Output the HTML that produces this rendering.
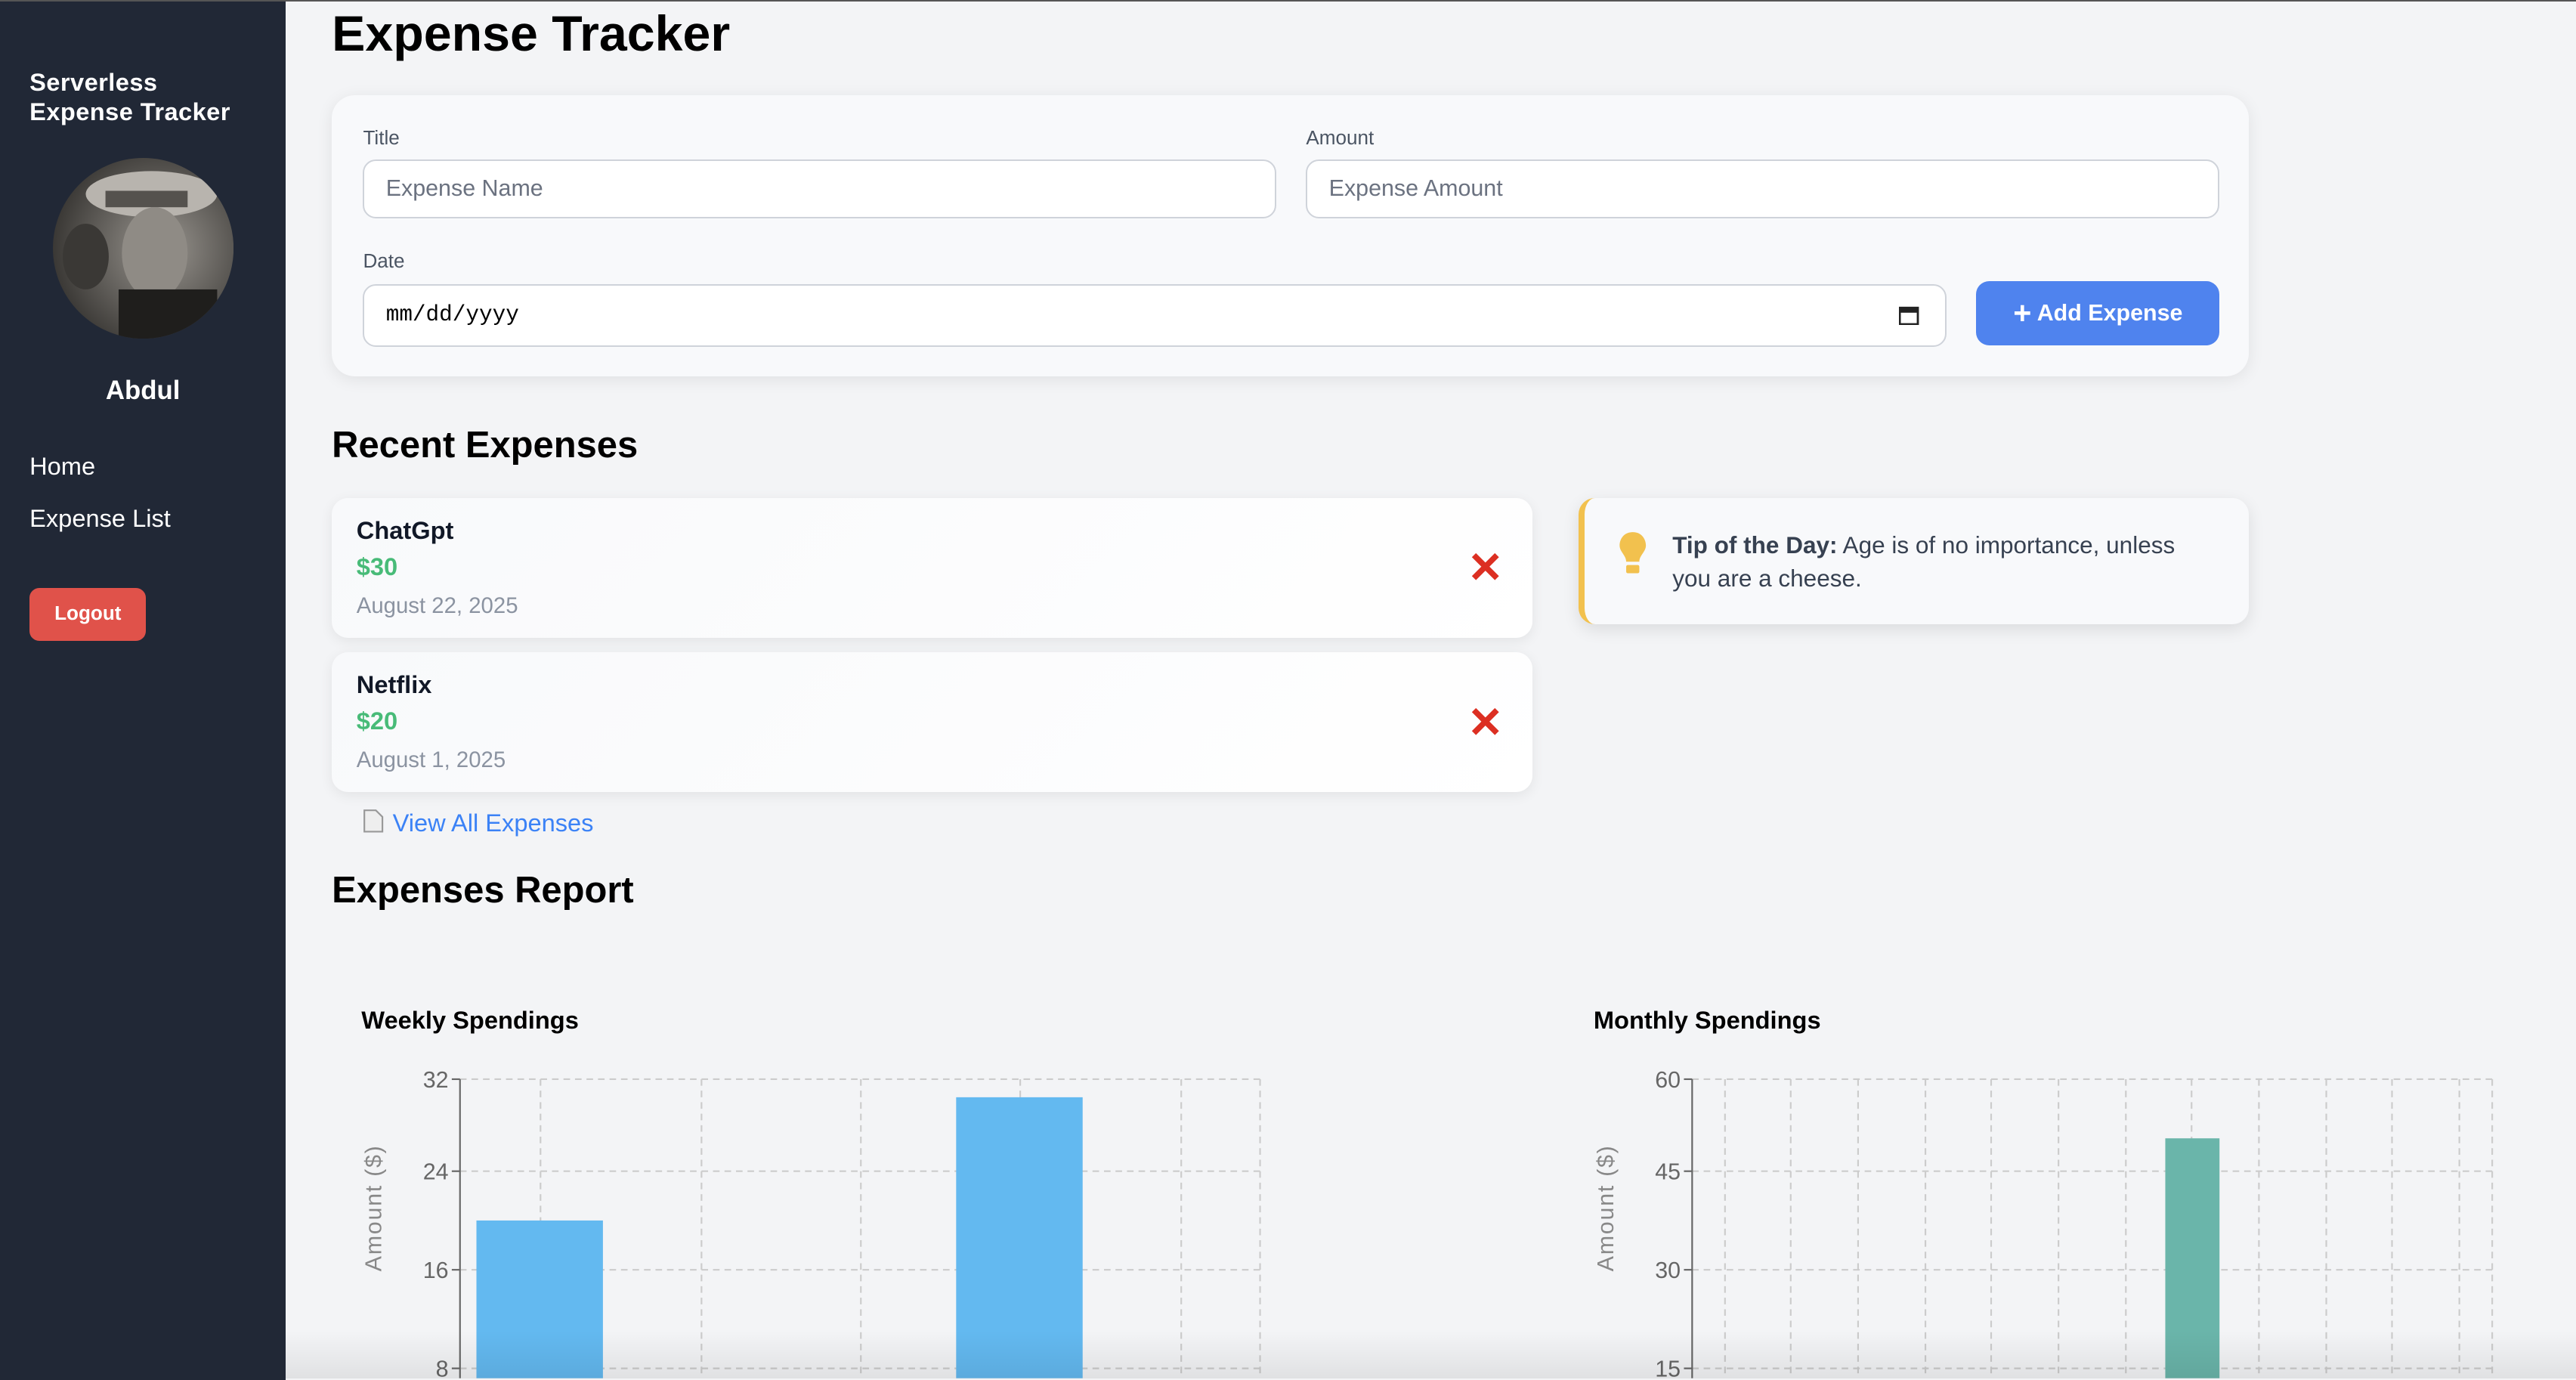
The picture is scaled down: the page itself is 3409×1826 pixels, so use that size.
<!DOCTYPE html>
<html><head><meta charset="utf-8"><style>
html,body{margin:0;padding:0;}
body{width:1568px;height:839px;overflow:hidden;zoom:2.17411;background:#f3f4f6;font-family:"Liberation Sans",sans-serif;position:relative;}
.a{position:absolute;}
#side{left:0;top:0;width:174px;height:839px;background:#212836;border-top:1px solid #555;}
.w{color:#fff;}
.card{background:#f8f9fb;border-radius:14px;box-shadow:0 2px 10px rgba(0,0,0,.08);}
.inp{background:#fff;border:1px solid #cfd3da;border-radius:8px;box-sizing:border-box;font-size:14px;color:#6b7280;padding-left:13px;line-height:34px;}
.lbl{font-size:12px;color:#4b5563;}
.exp{background:linear-gradient(135deg,#f8f9fb,#fff);border-radius:10px;box-shadow:0 2px 8px rgba(0,0,0,.07);}
.h2{font-size:22.5px;font-weight:bold;color:#000;}
</style></head><body>
<div id="side" class="a">
 <div class="a w" style="left:18px;top:40px;font-size:15px;font-weight:bold;line-height:18px;letter-spacing:0.2px;">Serverless<br>Expense Tracker</div>
 <svg class="a" style="left:32px;top:95px" width="110" height="110"><defs><clipPath id="c"><circle cx="55" cy="55" r="55"/></clipPath><radialGradient id="g" cx="0.6" cy="0.5" r="0.6"><stop offset="0" stop-color="#9a9690"/><stop offset="1" stop-color="#3a3835"/></radialGradient></defs><g clip-path="url(#c)"><rect width="110" height="110" fill="url(#g)"/><ellipse cx="60" cy="22" rx="40" ry="14" fill="#b8b4ae"/><rect x="32" y="20" width="50" height="10" fill="#55524e"/><ellipse cx="62" cy="58" rx="20" ry="28" fill="#8f8b85"/><rect x="40" y="80" width="60" height="30" fill="#1f1e1c"/><ellipse cx="20" cy="60" rx="14" ry="20" fill="#3a3835"/></g></svg>
 <div class="a w" style="left:0;width:174px;text-align:center;top:228px;font-size:16px;font-weight:bold;">Abdul</div>
 <div class="a w" style="left:18px;top:274px;font-size:15px;">Home</div>
 <div class="a w" style="left:18px;top:306px;font-size:15px;">Expense List</div>
 <div class="a w" style="left:18px;top:357px;width:71px;height:32px;background:#e0524a;border-radius:6px;font-size:12px;font-weight:bold;text-align:center;line-height:31px;">Logout</div>
</div>
<div class="a" style="left:174px;top:0;width:1394px;height:1px;background:#555"></div>
<div class="a" style="left:202px;top:3px;font-size:30.5px;font-weight:bold;color:#000;">Expense Tracker</div>
<div class="a card" style="left:202px;top:58px;width:1167px;height:171px;"></div>
<div class="a lbl" style="left:221px;top:77px;">Title</div>
<div class="a lbl" style="left:795px;top:77px;">Amount</div>
<div class="a inp" style="left:221px;top:97px;width:556px;height:36px;">Expense Name</div>
<div class="a inp" style="left:795px;top:97px;width:556px;height:36px;">Expense Amount</div>
<div class="a lbl" style="left:221px;top:152px;">Date</div>
<div class="a inp" style="left:221px;top:173px;width:964px;height:38px;line-height:36px;color:#000;font-family:'Liberation Mono',monospace;font-size:13.5px;">mm/dd/yyyy
 <svg class="a" style="right:16px;top:12px" width="12" height="12"><rect x="0.5" y="1.5" width="11" height="10" fill="none" stroke="#222" stroke-width="1.3"/><rect x="0.5" y="1.5" width="11" height="3" fill="#222"/></svg></div>
<div class="a" style="left:1203px;top:171px;width:148px;height:39px;background:#4f83ee;border-radius:8px;color:#fff;font-size:14px;font-weight:bold;line-height:39px;text-align:center;"><span style="font-size:19px;vertical-align:-2px;">+</span> Add Expense</div>
<div class="a h2" style="left:202px;top:258px;">Recent Expenses</div>
<div class="a exp" style="left:202px;top:303px;width:731px;height:85px;"></div>
<div class="a exp" style="left:202px;top:397px;width:731px;height:85px;"></div>
<div class="a" style="left:217px;top:314px;font-size:15px;font-weight:bold;color:#111827;">ChatGpt</div>
<div class="a" style="left:217px;top:336px;font-size:15px;font-weight:bold;color:#48bb78;">$30</div>
<div class="a" style="left:217px;top:361px;font-size:13.5px;color:#8b93a1;">August 22, 2025</div>
<div class="a" style="left:217px;top:408px;font-size:15px;font-weight:bold;color:#111827;">Netflix</div>
<div class="a" style="left:217px;top:430px;font-size:15px;font-weight:bold;color:#48bb78;">$20</div>
<div class="a" style="left:217px;top:455px;font-size:13.5px;color:#8b93a1;">August 1, 2025</div>
<svg class="a" style="left:894px;top:335px" width="20" height="20"><path d="M3 3L17 17M17 3L3 17" stroke="#dc2f22" stroke-width="3.5"/></svg>
<svg class="a" style="left:894px;top:429px" width="20" height="20"><path d="M3 3L17 17M17 3L3 17" stroke="#dc2f22" stroke-width="3.5"/></svg>
<div class="a" style="left:961px;top:303px;width:408px;height:77px;background:#f8f9fb;border-radius:10px;border-left:4px solid #f2c14e;box-sizing:border-box;box-shadow:0 3px 10px rgba(0,0,0,.1);"></div>
<svg class="a" style="left:984px;top:323px" width="20" height="28"><path d="M10 1C4 1 2 6 2 9c0 4 4 6 4 10h8c0-4 4-6 4-10 0-3-2-8-8-8z" fill="#f2c14e"/><rect x="6" y="21" width="8" height="5" rx="1" fill="#f2c14e"/></svg>
<div class="a" style="left:1018px;top:322px;width:322px;font-size:14.5px;line-height:20px;color:#374151;"><b>Tip of the Day:</b> Age is of no importance, unless you are a cheese.</div>
<svg class="a" style="left:221px;top:492px" width="13" height="15"><path d="M1 1h7l4 4v9H1z" fill="#eee" stroke="#999"/></svg>
<div class="a" style="left:239px;top:492px;font-size:15px;color:#3b82f6;">View All Expenses</div>
<div class="a h2" style="left:202px;top:529px;">Expenses Report</div>
<div class="a" style="left:220px;top:612px;font-size:15px;font-weight:bold;color:#000;">Weekly Spendings</div>
<div class="a" style="left:970px;top:612px;font-size:15px;font-weight:bold;color:#000;">Monthly Spendings</div>
<svg class="a" style="left:0;top:640px" width="1568" height="199" font-family="Liberation Sans" font-size="14" fill="#666">
 <g stroke="#ccc" stroke-dasharray="4,3">
  <line x1="280" y1="17" x2="767" y2="17"/><line x1="280" y1="73" x2="767" y2="73"/><line x1="280" y1="133" x2="767" y2="133"/><line x1="280" y1="193" x2="767" y2="193"/>
  <line x1="329" y1="17" x2="329" y2="199"/><line x1="427" y1="17" x2="427" y2="199"/><line x1="524" y1="17" x2="524" y2="199"/><line x1="621" y1="17" x2="621" y2="199"/><line x1="719" y1="17" x2="719" y2="199"/><line x1="767" y1="17" x2="767" y2="199"/>
  <line x1="1030" y1="17" x2="1517" y2="17"/><line x1="1030" y1="73" x2="1517" y2="73"/><line x1="1030" y1="133" x2="1517" y2="133"/><line x1="1030" y1="193" x2="1517" y2="193"/>
  <line x1="1050" y1="17" x2="1050" y2="199"/><line x1="1090" y1="17" x2="1090" y2="199"/><line x1="1131" y1="17" x2="1131" y2="199"/><line x1="1172" y1="17" x2="1172" y2="199"/><line x1="1212" y1="17" x2="1212" y2="199"/><line x1="1253" y1="17" x2="1253" y2="199"/><line x1="1294" y1="17" x2="1294" y2="199"/><line x1="1334" y1="17" x2="1334" y2="199"/><line x1="1375" y1="17" x2="1375" y2="199"/><line x1="1416" y1="17" x2="1416" y2="199"/><line x1="1456" y1="17" x2="1456" y2="199"/><line x1="1497" y1="17" x2="1497" y2="199"/><line x1="1517" y1="17" x2="1517" y2="199"/>
 </g>
 <g stroke="#666"><line x1="280" y1="17" x2="280" y2="199"/><line x1="1030" y1="17" x2="1030" y2="199"/>
 <line x1="275" y1="17" x2="280" y2="17"/><line x1="275" y1="73" x2="280" y2="73"/><line x1="275" y1="133" x2="280" y2="133"/><line x1="275" y1="193" x2="280" y2="193"/>
 <line x1="1025" y1="17" x2="1030" y2="17"/><line x1="1025" y1="73" x2="1030" y2="73"/><line x1="1025" y1="133" x2="1030" y2="133"/><line x1="1025" y1="193" x2="1030" y2="193"/></g>
 <rect x="290" y="103" width="77" height="96" fill="#63b9f0"/>
 <rect x="582" y="28" width="77" height="171" fill="#63b9f0"/>
 <rect x="1318" y="53" width="33" height="146" fill="#6ab5aa"/>
 <g text-anchor="end"><text x="273" y="22">32</text><text x="273" y="78">24</text><text x="273" y="138">16</text><text x="273" y="198">8</text>
 <text x="1023" y="22">60</text><text x="1023" y="78">45</text><text x="1023" y="138">30</text><text x="1023" y="198">15</text></g>
 <text transform="translate(232,134) rotate(-90)" fill="#888" font-size="14" letter-spacing="0.8">Amount ($)</text>
 <text transform="translate(982,134) rotate(-90)" fill="#888" font-size="14" letter-spacing="0.8">Amount ($)</text>
</svg>
<div class="a" style="left:174px;top:810px;width:1394px;height:29px;background:linear-gradient(rgba(0,0,0,0),rgba(0,0,0,.08));"></div>
</body></html>
